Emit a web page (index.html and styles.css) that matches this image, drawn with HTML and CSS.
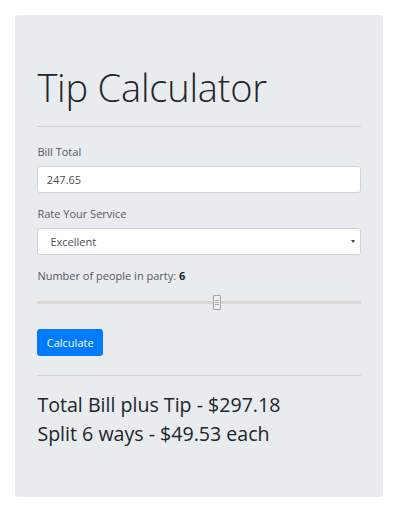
FILE: index.html
```html
<!DOCTYPE html>
<html lang="en">
<head>
<meta charset="utf-8">
<title>Tip Calculator</title>
<link rel="stylesheet" href="styles.css">
</head>
<body>
<div class="jumbotron">
  <h1 class="title">Tip Calculator</h1>
  <hr class="divider">
  <div class="field">
    <label class="label" for="bill">Bill Total</label>
    <input class="control" id="bill" type="text" value="247.65">
  </div>
  <div class="field">
    <label class="label" for="service">Rate Your Service</label>
    <select class="control select" id="service">
      <option>Excellent</option>
    </select>
  </div>
  <div class="field">
    <label class="label" for="people">Number of people in party: <b class="count">6</b></label>
    <input class="range" id="people" type="range" min="1" max="10" value="6">
  </div>
  <button class="btn" type="button">Calculate</button>
  <hr class="divider lower">
  <h3 class="result">Total Bill plus Tip - $297.18</h3>
  <h3 class="result">Split 6 ways - $49.53 each</h3>
</div>
</body>
</html>
```

FILE: styles.css
```css
* { box-sizing: border-box; }

body {
  margin: 0;
  padding: 15px 17px 12px 15px;
  background: #ffffff;
  font-family: "Open Sans", "Noto Sans", sans-serif;
  font-size: 11.2px;
  line-height: 1.5;
  color: #212529;
}

.jumbotron {
  background: #e9ecef;
  border-radius: 3px;
  padding: 50px 22.4px 38px;
  height: 482px;
}

.title {
  margin: 0;
  font-weight: 300;
  font-size: 38px;
  line-height: 1.2;
  letter-spacing: -0.2px;
  color: #212529;
}

.divider {
  border: 0;
  border-top: 1px solid rgba(0, 0, 0, 0.1);
  margin: 15px 0 17px;
}

.divider.lower {
  margin: 19px 0 17px;
}

.field {
  display: flex;
  flex-direction: column;
  margin-bottom: 13px;
}

.label {
  display: block;
  margin-bottom: 5.6px;
  font-size: 11px;
  line-height: 16.8px;
  color: #555a5f;
}

.count {
  font-weight: 700;
  color: #212529;
}

.control {
  display: block;
  width: 100%;
  height: 26.6px;
  padding: 2px 8.4px;
  font-family: inherit;
  font-size: 11px;
  color: #495057;
  background: #ffffff;
  border: 1px solid #ced4da;
  border-radius: 2.8px;
  outline: none;
}

.select {
  -webkit-appearance: none;
  appearance: none;
  padding-left: 12px;
  background-image: url("data:image/svg+xml,%3Csvg xmlns='http://www.w3.org/2000/svg' width='5' height='4'%3E%3Cpath d='M0 0h5L2.5 4z' fill='%23444'/%3E%3C/svg%3E");
  background-repeat: no-repeat;
  background-position: right 5px center;
  background-size: 4px 3px;
}

.range {
  -webkit-appearance: none;
  appearance: none;
  display: block;
  width: 100%;
  height: 26px;
  margin: 0;
  background: transparent;
}

.range::-webkit-slider-runnable-track {
  height: 3px;
  background: #ddd8d4;
}

.range::-webkit-slider-thumb {
  -webkit-appearance: none;
  width: 8px;
  height: 15px;
  margin-top: -6px;
  border: 1px solid #a3a3a3;
  border-radius: 1px;
  background:
    linear-gradient(#a8a8a8, #a8a8a8) center 4px / 4px 1px no-repeat,
    linear-gradient(#a8a8a8, #a8a8a8) center 6px / 4px 1px no-repeat,
    linear-gradient(#a8a8a8, #a8a8a8) center 8px / 4px 1px no-repeat,
    #f0f0f0;
}

.btn {
  display: block;
  height: 26.6px;
  padding: 0 8.4px;
  font-family: inherit;
  font-size: 11px;
  color: #ffffff;
  background: #007bff;
  border: 1px solid #007bff;
  border-radius: 2.8px;
}

.result {
  margin: 0 0 5.6px;
  font-size: 19.6px;
  font-weight: 500;
  line-height: 1.2;
  color: #212529;
}
```
